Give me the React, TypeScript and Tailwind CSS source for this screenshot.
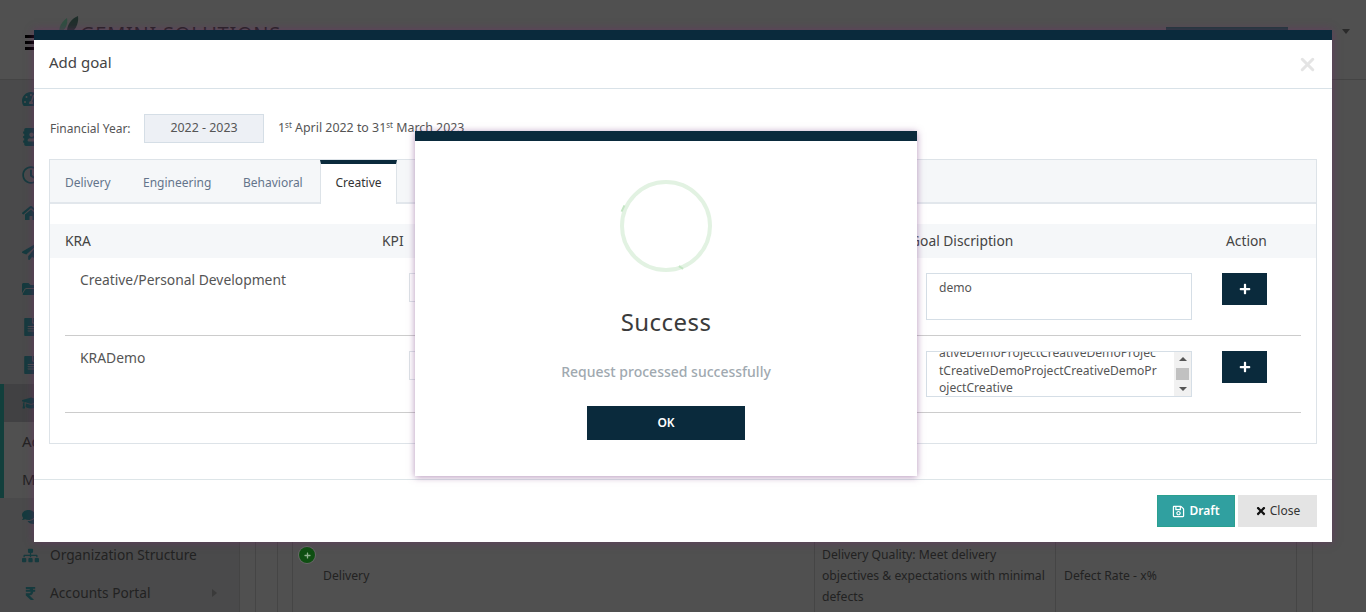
import { X } from 'lucide-react';
import { FaAddressBook, FaComments, FaFileAlt, FaFolderOpen, FaGraduationCap, FaHome, FaPaperPlane, FaPlus, FaRegClock, FaRegSave, FaRupeeSign, FaSitemap, FaTachometerAlt, FaTimes } from 'react-icons/fa';

const font = "font-['Noto_Sans','Open_Sans',sans-serif]";

function SideIcon({ children }: { children: React.ReactNode }) {
    return <div className="h-[38px] flex items-center pl-[22px] text-[#153a3e]">{children}</div>;
}

function Background() {
    return (
        <div className="absolute inset-0 bg-[#505050] overflow-hidden">
            {/* Top bar */}
            <div className="h-[80px] border-b border-[#444] flex items-center relative">
                <div className="ml-[25px] flex flex-col gap-[3px] mt-[5px]">
                    <span className="w-[12px] h-[3px] bg-black" />
                    <span className="w-[12px] h-[3px] bg-black" />
                    <span className="w-[12px] h-[3px] bg-black" />
                </div>
                <svg className="absolute left-[58px] top-[15px]" width="22" height="20" viewBox="0 0 22 20">
                    <path d="M1 18C1 10 5 6 9 3c1 6-1 12-8 15z" fill="#2f4f40" />
                    <path d="M9 20C8 10 13 4 20 1c1 8-3 16-11 19z" fill="#1f2f2b" />
                </svg>
                <span className="absolute left-[80px] top-[20px] text-[20px] tracking-[0.75px] leading-[28px] text-[#222]">GEMINI SOLUTIONS</span>
                <div className="absolute left-[1166px] top-[27px] w-[122px] h-[4px] bg-[#1d3a3a]" />
                <div className="absolute left-[1342px] top-[29px] w-0 h-0 border-x-[4px] border-x-transparent border-t-[5px] border-t-[#2a2a2a]" />
            </div>

            {/* Sidebar */}
            <div className="absolute left-0 top-[80px] bottom-0 w-[240px] border-r border-[#444] bg-[#4a4a4b]">
                <SideIcon><FaTachometerAlt size={18} /></SideIcon>
                <SideIcon><FaAddressBook size={18} className="-scale-x-100" /></SideIcon>
                <SideIcon><FaRegClock size={18} /></SideIcon>
                <SideIcon><FaHome size={18} /></SideIcon>
                <SideIcon><FaPaperPlane size={18} /></SideIcon>
                <SideIcon><FaFolderOpen size={18} /></SideIcon>
                <SideIcon><FaFileAlt size={18} /></SideIcon>
                <SideIcon><FaFileAlt size={18} /></SideIcon>
                <div className="border-l-[4px] border-[#123f3c]">
                    <div className="h-[38px] bg-[#414143] flex items-center pl-[18px] text-[#153a3e]"><FaGraduationCap size={18} /></div>
                    <div className="h-[38px] bg-[#505050] flex items-center pl-[18px] text-[15px] text-[#222]">Ad</div>
                    <div className="h-[38px] bg-[#505050] flex items-center pl-[18px] text-[15px] text-[#222]">My</div>
                </div>
                <SideIcon><FaComments size={18} /></SideIcon>
                <div className="h-[38px] flex items-center pl-[22px] gap-[11px] text-[13.7px] text-[#222]">
                    <FaSitemap size={17} className="text-[#153a3e]" />
                    <span>Organization Structure</span>
                </div>
                <div className="h-[38px] flex items-center pl-[22px] text-[13.7px] text-[#222]">
                    <FaRupeeSign size={15} className="text-[#153a3e] w-[17px]" />
                    <span className="ml-[11px]">Accounts Portal</span>
                    <span className="ml-auto mr-[22px] w-0 h-0 border-y-[4px] border-y-transparent border-l-[5px] border-l-[#3a3a3a]" />
                </div>
            </div>

            {/* Goals table peeking out under the dialog */}
            <div className="absolute left-[255px] top-[80px] bottom-0 w-[1px] bg-[#454545]" />
            <div className="absolute left-[277px] top-[80px] bottom-0 w-[1px] bg-[#454545]" />
            <div className="absolute left-[1312px] top-[80px] bottom-0 w-[1px] bg-[#454545]" />
            <div className="absolute left-[292px] top-[542px] w-[1005px] h-[70px] border-x border-[#454545] flex text-[12.2px] leading-[21px] text-[#222]">
                <div className="w-[522px] border-r border-[#454545] pl-[30px] pt-[23px]">Delivery</div>
                <div className="w-[241px] border-r border-[#454545] pl-[7px] pr-[6px] pt-[2px]">
                    Delivery Quality: Meet delivery objectives &amp; expectations with minimal defects
                </div>
                <div className="pl-[8px] pt-[23px]">Defect Rate - x%</div>
            </div>
            <div className="absolute left-[299px] top-[547px] w-[16px] h-[16px] rounded-full bg-[#0f4f12] ring-1 ring-[#666] flex items-center justify-center">
                <FaPlus size={7} className="text-[#8fb08f]" />
            </div>
        </div>
    );
}

function TextBox({ children }: { children: React.ReactNode }) {
    return <div className="w-[266px] border border-[#d5dee6] text-[12.1px] text-[#555]">{children}</div>;
}

function PlusButton() {
    return (
        <div className="w-[45px] h-[32px] bg-[#0a2a3c] flex items-center justify-center text-white">
            <FaPlus size={12} />
        </div>
    );
}

function GoalDialog() {
    return (
        <div className="absolute left-[34px] top-[30px] w-[1298px] h-[512px] bg-white border-t-[10px] border-[#0a2a3c] flex flex-col shadow-[0_0_8px_rgba(120,40,110,0.5)]">
            <div className="h-[49px] shrink-0 border-b border-[#d9e2e8] flex items-center justify-between pl-[15px] pr-[14px]">
                <span className="text-[15px] text-[#444] -mt-[4px]">Add goal</span>
                <X size={21} strokeWidth={3.5} className="text-[#e4e4e4] mt-[1px]" />
            </div>

            <div className="flex-1 px-[15px] pt-[25px]">
                <div className="flex items-center h-[29px] text-[12px] text-[#555]">
                    <span className="w-[95px] pl-[1px]">Financial Year:</span>
                    <div className="w-[120px] h-[29px] bg-[#edf0f5] border border-[#d5dee6] flex items-center justify-center text-[12.4px]">2022 - 2023</div>
                    <span className="ml-[14px] text-[12.4px]">1<sup className="text-[8px]">st</sup> April 2022 to 31<sup className="text-[8px]">st</sup> March 2023</span>
                </div>

                <div className="mt-[16px] h-[285px] border border-[#dde3e8]">
                    <div className="h-[44px] bg-[#f5f7f9] border-b-2 border-[#e2e7ec] flex text-[12px] text-[#64748b]">
                        <span className="w-[78px] pl-[15px] pt-[14px]">Delivery</span>
                        <span className="w-[99px] pl-[15px] pt-[14px]">Engineering</span>
                        <span className="w-[93px] pl-[16px] pt-[14px]">Behavioral</span>
                        <span className="w-[77px] h-[44px] text-center pt-[10px] bg-white border-x border-[#dde3e8] border-t-[4px] border-t-[#0a2a3c] text-[#333]">Creative</span>
                    </div>

                    <div className="mt-[20px] h-[34px] bg-[#f5f7f9] flex items-center text-[13.8px] text-[#444] relative">
                        <span className="ml-[15px]">KRA</span>
                        <span className="absolute left-[332px]">KPI</span>
                        <span className="absolute left-[860px]">Goal Discription</span>
                        <span className="absolute left-[1176px]">Action</span>
                    </div>

                    <div className="mx-[15px] h-[78px] border-b border-[#ccc] relative text-[13.85px] text-[#555]">
                        <span className="absolute left-[15px] top-[12px]">Creative/Personal Development</span>
                        <div className="absolute left-[344px] top-[15px] w-[30px] h-[29px] border border-[#dde3e8]" />
                        <div className="absolute left-[861px] top-[15px]">
                            <TextBox><div className="h-[45px] pl-[12px] pt-[5px]">demo</div></TextBox>
                        </div>
                        <div className="absolute left-[1157px] top-[15px]"><PlusButton /></div>
                    </div>

                    <div className="mx-[15px] h-[77px] border-b border-[#ccc] relative text-[13.85px] text-[#555]">
                        <span className="absolute left-[15px] top-[12px]">KRADemo</span>
                        <div className="absolute left-[344px] top-[15px] w-[30px] h-[29px] border border-[#dde3e8]" />
                        <div className="absolute left-[861px] top-[15px]">
                            <TextBox>
                                <div className="h-[44px] flex overflow-hidden">
                                    <div className="w-[232px] pl-[12px] -mt-[8px] leading-[17.5px] whitespace-nowrap overflow-hidden">
                                        <div>ativeDemoProjectCreativeDemoProjec</div>
                                        <div>tCreativeDemoProjectCreativeDemoPr</div>
                                        <div>ojectCreative</div>
                                    </div>
                                    <div className="ml-auto w-[17px] bg-[#f1f1f1] flex flex-col items-center justify-between py-[5px]">
                                        <span className="w-0 h-0 border-x-[4px] border-x-transparent border-b-[4px] border-b-[#555]" />
                                        <span className="w-[13px] h-[12px] bg-[#c1c1c1]" />
                                        <span className="w-0 h-0 border-x-[4px] border-x-transparent border-t-[4px] border-t-[#555]" />
                                    </div>
                                </div>
                            </TextBox>
                        </div>
                        <div className="absolute left-[1157px] top-[15px]"><PlusButton /></div>
                    </div>
                </div>
            </div>

            <div className="h-[63px] shrink-0 border-t border-[#dde5e8] flex items-start justify-end gap-[3px] pt-[15px] pr-[15px] text-[12px]">
                <div className="w-[78px] h-[32px] bg-[#30a0a0] border border-[#2aa08f] text-white font-semibold flex items-center justify-center gap-[4px]">
                    <FaRegSave size={13} /> Draft
                </div>
                <div className="w-[79px] h-[32px] bg-[#e4e4e4] text-[#333] flex items-center justify-center gap-[3px]">
                    <FaTimes size={12} className="text-[#111]" /> Close
                </div>
            </div>
        </div>
    );
}

function SuccessDialog() {
    return (
        <div className="absolute left-[415px] top-[131px] w-[502px] h-[345px] bg-white border-t-[10px] border-[#0a2a3c] shadow-[0_1px_7px_rgba(120,60,130,0.55)] flex flex-col items-center">
            <div className="mt-[39px] w-[92px] h-[92px] rounded-full border-[4px] border-[#e2f2e2] relative">
                <span className="absolute -left-[2px] top-[21px] w-[2px] h-[7px] bg-[#c4e6c4] rotate-[25deg]" />
                <span className="absolute left-[56px] top-[81px] w-[2px] h-[5px] bg-[#c4e6c4] -rotate-[55deg]" />
            </div>
            <div className="mt-[33px] text-[24px] leading-[34px] text-[#3b3b3b] tracking-[0.45px]">Success</div>
            <div className="mt-[23px] text-[14px] leading-[20px] font-medium text-[#a0a9b0]">Request processed successfully</div>
            <div className="mt-[24px] w-[158px] h-[34px] bg-[#0a2a3c] text-white text-[12px] font-semibold flex items-center justify-center">OK</div>
        </div>
    );
}

export default function App() {
    return (
        <div className={`relative w-[1366px] h-[612px] overflow-hidden ${font}`}>
            <Background />
            <GoalDialog />
            <SuccessDialog />
        </div>
    );
}
